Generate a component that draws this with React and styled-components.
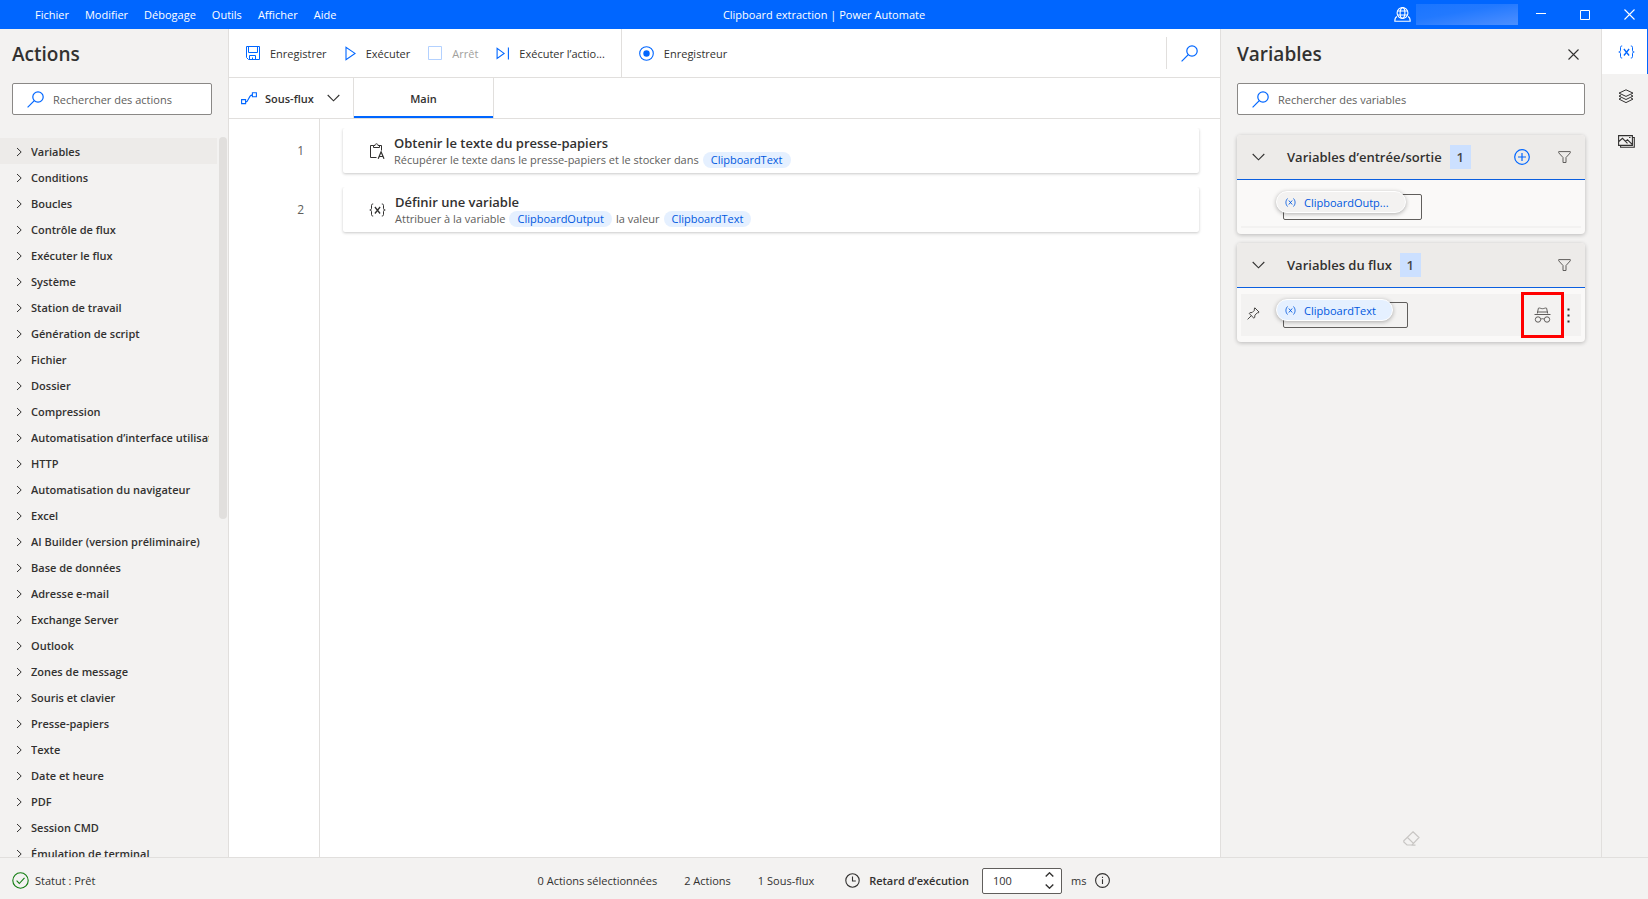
import styled, { createGlobalStyle } from "styled-components";

const GlobalStyle = createGlobalStyle`
  *, *::before, *::after { box-sizing: border-box; }
  body {
    margin: 0;
    font-family: "Open Sans", "Noto Sans", sans-serif;
    font-size: 11px;
    line-height: 16px;
    color: #323130;
    background: #f3f2f1;
  }
  h1, h2, h3, p, ul, ol { margin: 0; padding: 0; }
  ul, ol { list-style: none; }
  button, input {
    margin: 0;
    padding: 0;
    border: 0;
    font: inherit;
    color: inherit;
    background: none;
  }
  svg { display: block; flex: none; }
`;

const Page = styled.div`
  height: 100vh;
  display: flex;
  flex-direction: column;
  overflow: hidden;
`;

/* ---------- title bar ---------- */

const TitleBar = styled.header`
  height: 29px;
  flex: none;
  display: grid;
  grid-template-columns: 1fr auto 1fr;
  align-items: center;
  background: #0066ff;
  color: #fff;
`;

const MenuBar = styled.nav`
  display: flex;
  gap: 16px;
  padding-left: 35px;
  white-space: nowrap;
`;

const AppTitle = styled.h1`
  font-size: 11px;
  font-weight: 400;
`;

const WindowControls = styled.div`
  display: flex;
  justify-content: flex-end;
  align-items: center;
  gap: 34px;
  padding-right: 13px;
`;

const Account = styled.div`
  display: flex;
  align-items: center;
  gap: 5px;
  margin-right: -16px;
`;

const AccountName = styled.span`
  width: 102px;
  height: 21px;
  background: linear-gradient(170deg, #1a75ff 0%, #2279ff 40%, #4088ff 80%, #4a90ff 100%);
`;

/* ---------- shared parts ---------- */

const Body = styled.div`
  flex: 1;
  min-height: 0;
  display: flex;
`;

const PanelTitle = styled.h2`
  font-size: 19px;
  line-height: 28px;
  font-weight: 600;
`;

const SearchBox = styled.label`
  height: 32px;
  flex: none;
  display: flex;
  align-items: center;
  gap: 9px;
  padding: 0 14px;
  border: 1px solid #8a8886;
  border-radius: 2px;
  background: #fff;

  input {
    flex: 1;
    min-width: 0;
    padding-top: 2px;
    outline: none;
  }
  input::placeholder {
    color: #605e5c;
    opacity: 1;
  }
`;

/* ---------- actions panel ---------- */

const ActionsPanel = styled.aside`
  width: 229px;
  flex: none;
  display: flex;
  flex-direction: column;
  border-right: 1px solid #e1dfdd;

  ${PanelTitle} { padding: 11px 12px 15px; }
  ${SearchBox} { margin: 0 16px 22px 12px; }
`;

const ListArea = styled.div`
  flex: 1;
  min-height: 0;
  display: flex;
  gap: 2px;
  padding-right: 1px;
`;

const ActionList = styled.ul`
  flex: 1;
  min-width: 0;
  overflow: hidden;
  padding-top: 1px;
`;

const ActionGroup = styled.button`
  width: 100%;
  height: 26px;
  display: flex;
  align-items: center;
  gap: 8px;
  padding: 1px 8px 0 15px;
  font-weight: 600;
  white-space: nowrap;
  text-align: left;
  background: ${props => (props.$active ? "#edebe9" : "transparent")};

  span {
    flex: 1;
    overflow: hidden;
  }
`;

const ScrollThumb = styled.div`
  width: 8px;
  height: 53%;
  border-radius: 4px;
  background: #e1dfdd;
`;

/* ---------- flow designer ---------- */

const Designer = styled.main`
  flex: 1;
  min-width: 0;
  display: flex;
  flex-direction: column;
  background: #fff;
`;

const Toolbar = styled.div`
  height: 49px;
  flex: none;
  display: flex;
  align-items: center;
  border-bottom: 1px solid #e1dfdd;
`;

const ToolGroup = styled.div`
  height: 100%;
  display: flex;
  align-items: center;
  gap: 18px;
  padding: 0 16px 0 17px;
  border-right: ${props => (props.$divided ? "1px solid #e1dfdd" : "0")};
`;

const ToolButton = styled.button`
  display: flex;
  align-items: center;
  gap: 10px;
  white-space: nowrap;
  color: ${props => (props.disabled ? "#a19f9d" : "#323130")};

  span { padding-top: 2px; }
`;

const ToolSearch = styled.button`
  height: 32px;
  margin-left: auto;
  padding: 0 22px 0 14px;
  border-left: 1px solid #e1dfdd;
`;

const TabStrip = styled.div`
  height: 41px;
  flex: none;
  display: flex;
  border-bottom: 1px solid #e1dfdd;
`;

const Subflows = styled.button`
  width: 125px;
  display: flex;
  align-items: center;
  gap: 8px;
  padding: 0 13px 0 12px;
  font-weight: 600;
  white-space: nowrap;
  border-right: 1px solid #e1dfdd;

  span { padding-top: 2px; }
  svg:last-child { margin-left: auto; }
`;

const Tab = styled.button`
  width: 140px;
  padding-top: 2px;
  font-weight: 600;
  border-right: 1px solid #e1dfdd;
  box-shadow: inset 0 -2px #0066ff;
`;

const Canvas = styled.div`
  flex: 1;
  min-height: 0;
  display: flex;
`;

const Gutter = styled.ol`
  width: 91px;
  flex: none;
  padding: 9px 15px 0 0;
  display: flex;
  flex-direction: column;
  gap: 14px;
  border-right: 1px solid #e1dfdd;
  text-align: right;
  font-size: 12px;
  line-height: 45px;
  color: #605e5c;
`;

const Steps = styled.ol`
  flex: 1;
  min-width: 0;
  display: flex;
  flex-direction: column;
  gap: 14px;
  padding: 9px 21px 0 23px;
`;

const Step = styled.li`
  height: 45px;
  display: flex;
  align-items: center;
  gap: 9px;
  padding-left: 26px;
  border-radius: 2px;
  background: #fff;
  box-shadow: 0 1px 3px rgba(0, 0, 0, 0.22);
  clip-path: inset(0 -4px -4px -4px);
`;

const StepTitle = styled.h3`
  font-size: 13px;
  line-height: 18px;
  font-weight: 600;
`;

const StepText = styled.p`
  display: flex;
  gap: 4px;
  white-space: nowrap;
  color: #605e5c;
`;

const Token = styled.span`
  padding: 0 8px;
  border-radius: 8px;
  background: #e5f0ff;
  color: #0058e0;
`;

/* ---------- variables panel ---------- */

const VariablesPanel = styled.aside`
  width: 382px;
  flex: none;
  display: flex;
  flex-direction: column;
  padding: 0 16px 11px;
  border-left: 1px solid #e1dfdd;
  border-right: 1px solid #e1dfdd;
`;

const PanelHeader = styled.div`
  display: flex;
  align-items: center;
  justify-content: space-between;
  padding: 11px 6px 15px 0;
`;

const Cards = styled.div`
  flex: 1;
  display: flex;
  flex-direction: column;
  gap: 9px;
  padding-top: 20px;
`;

const Card = styled.section`
  border-radius: 4px;
  background: #faf9f8;
  box-shadow: 0 1px 4px rgba(0, 0, 0, 0.24);
`;

const CardHeader = styled.div`
  height: 45px;
  display: flex;
  align-items: center;
  padding: 0 14px 0 15px;
  border-radius: 4px 4px 0 0;
  border-bottom: 1px solid #0b5fe0;
  background: #edebe9;

  h3 {
    margin: 0 8px 0 22px;
    font-size: 13px;
    font-weight: 600;
  }
`;

const Count = styled.span`
  width: 21px;
  line-height: 24px;
  text-align: center;
  font-size: 13px;
  font-weight: 600;
  color: #484644;
  background: #cce0ff;
`;

const CardTools = styled.div`
  margin-left: auto;
  display: flex;
  align-items: center;
  gap: 28px;
`;

const VariableRow = styled.div`
  height: 54px;
  padding: 6px 4px;
`;

const VariableInner = styled.div`
  height: 42px;
  display: flex;
  align-items: center;
  border-bottom: ${props => (props.$hovered ? "0" : "2px solid #f3f2f1")};
  background: ${props => (props.$hovered ? "#f3f2f1" : "transparent")};
`;

const PinSlot = styled.div`
  width: 42px;
  padding-left: 6px;
`;

const ValueBox = styled.div`
  position: relative;
  align-self: flex-start;
  width: ${props => props.$width}px;
  height: 26px;
  margin-top: 8px;
  border: 1px solid #605e5c;
  border-radius: 2px;
`;

/* the name chip floats over the corner of its value box */
const NameChip = styled.button`
  position: absolute;
  left: -8px;
  top: -4px;
  height: 22px;
  display: flex;
  align-items: center;
  gap: 8px;
  padding: 0 16px 0 8px;
  border: 1px solid #fff;
  border-radius: 11px;
  white-space: nowrap;
  color: #0058e0;
  background: ${props => (props.$tinted ? "#e5f0ff" : "#f3f2f1")};
  box-shadow: 0 1px 4px rgba(0, 0, 0, 0.3);

  span { padding-top: 2px; }
`;

const RowTools = styled.div`
  height: 100%;
  margin-left: auto;
  display: flex;
  align-items: center;
  padding-right: 11px;
  gap: 3px;
`;

const SensitiveButton = styled.button`
  position: relative;
  width: 43px;
  height: 100%;
  display: flex;
  align-items: center;
  justify-content: center;

  &::after {
    content: "";
    position: absolute;
    inset: -2px 0;
    border: 3px solid #ff0000;
  }
`;

const PanelFooter = styled.div`
  display: flex;
  justify-content: center;
`;

/* ---------- right rail ---------- */

const Rail = styled.nav`
  width: 46px;
  flex: none;
`;

const RailButton = styled.button`
  width: 100%;
  height: 45px;
  display: flex;
  align-items: center;
  justify-content: center;
  padding-left: 2px;
  color: ${props => (props.$active ? "#0066ff" : "#323130")};
  background: ${props => (props.$active ? "#fff" : "transparent")};
  box-shadow: ${props => (props.$active ? "inset -1px 0 #0066ff" : "none")};
`;

/* ---------- status bar ---------- */

const StatusBar = styled.footer`
  height: 42px;
  flex: none;
  display: grid;
  grid-template-columns: 1fr auto 1fr;
  align-items: center;
  border-top: 1px solid #e1dfdd;
  padding: 4px 12px 0;
  white-space: nowrap;
`;

const Status = styled.div`
  display: flex;
  align-items: center;
  gap: 6px;
`;

const StatusCenter = styled.div`
  display: flex;
  align-items: center;
  gap: 27px;
`;

const Delay = styled.div`
  display: flex;
  align-items: center;
  gap: 9px;
  margin-left: 4px;

  label { font-weight: 600; }
`;

const DelayField = styled.div`
  width: 80px;
  height: 26px;
  display: flex;
  align-items: center;
  margin-left: 4px;
  padding: 0 7px 0 10px;
  border: 1px solid #605e5c;
  border-radius: 2px;
  background: #fff;

  input {
    flex: 1;
    min-width: 0;
    outline: none;
    appearance: textfield;
  }
  input::-webkit-inner-spin-button { appearance: none; }
`;

const Spinner = styled.div`
  display: flex;
  flex-direction: column;
  gap: 7px;
`;

/* ---------- icons ---------- */

const Icon = ({ w = 16, h = 16, color = "currentColor", stroke = 1, children }) => (
  <svg width={w} height={h} viewBox={`0 0 ${w} ${h}`} fill="none" stroke={color} strokeWidth={stroke} aria-hidden="true">
    {children}
  </svg>
);

const SearchIcon = () => (
  <Icon w={17} h={17} color="#0066ff" stroke={1.2}>
    <circle cx="11" cy="6" r="5.2" />
    <path d="M7.3 9.7 0.6 16.4" />
  </Icon>
);

const ChevronRight = () => (
  <Icon w={8} h={10} stroke={1}><path d="M2 1l4.2 4L2 9" /></Icon>
);

const ChevronDown = () => (
  <Icon w={13} h={8} stroke={1.1}><path d="M0.7 1l5.8 5.8L12.3 1" /></Icon>
);

const SaveIcon = () => (
  <Icon w={14} h={14} color="#0066ff">
    <path d="M0.5 0.5h13v13h-11l-2-2zM2.5 0.5v6h9v-6M3.5 13.5v-4h6v4M6.5 11.5v2" />
  </Icon>
);

const PlayIcon = () => (
  <Icon w={11} h={15} color="#0066ff" stroke={1.1}><path d="M1 1.2v12.4l9-6.2z" /></Icon>
);

const StopIcon = () => (
  <Icon w={14} h={14} color="#b3d1ff"><path d="M0.5 0.5h13v13h-13z" /></Icon>
);

const NextIcon = () => (
  <Icon w={13} h={13} color="#0066ff" stroke={1.1}><path d="M1.1 1.3v10.2l7-5.1zM12.4 0.4v12" /></Icon>
);

const RecordIcon = () => (
  <Icon w={15} h={15} color="#0066ff" stroke={1.1}>
    <circle cx="7.5" cy="7.5" r="6.8" />
    <circle cx="7.5" cy="7.5" r="3.2" fill="#0066ff" stroke="none" />
  </Icon>
);

const SubflowIcon = () => (
  <Icon w={16} h={13} color="#0066ff" stroke={1.1}>
    <path d="M0.6 7.6h4v4h-4zM11.4 0.8h4v4h-4zM4.6 10.2C8.2 9.6 7.4 3 11.4 2.8" />
  </Icon>
);

const ClipboardIcon = () => (
  <Icon w={16} h={16} color="#323130">
    <path d="M7.5 14.5h-6v-12h3M10 2.5h2.500v5M4.5 4.500V2.500h1.500C6 0.200 9 0.200 9 2.500h1.500v2z" />
    <path d="M9.200 15.800l2.900-7 2.900 7M10.200 13.500h3.800" stroke="#323130" strokeWidth="1.2" />
  </Icon>
);

const VariableIcon = () => (
  <Icon w={17} h={14}>
    <path d="M4.200 1C2.600 1 2.500 1.700 2.500 2.700v2.600C2.500 6.400 2 7 0.800 7 2 7 2.500 7.600 2.500 8.700v2.600c0 1 .1 1.700 1.700 1.700M12.800 1c1.600 0 1.700.7 1.700 1.700v2.600c0 1.100.5 1.700 1.700 1.700-1.200 0-1.700.6-1.700 1.700v2.600c0 1-.1 1.700-1.700 1.700" />
    <path d="M5.900 4l5.200 6.500M11.100 4l-5.200 6.500" strokeWidth="1.3" />
  </Icon>
);

const ParenVariableIcon = () => (
  <Icon w={11} h={9} stroke={0.9}>
    <path d="M2.5 0.5C0.4 3 0.4 6 2.5 8.5M8.5 0.5C10.6 3 10.6 6 8.5 8.5M3.8 2.5l3.4 4M7.2 2.5L3.8 6.5" />
  </Icon>
);

const CloseIcon = () => (
  <Icon w={11} h={11} stroke={1.1}><path d="M0.5 0.5l10 10M10.5 0.5l-10 10" /></Icon>
);

const PlusIcon = () => (
  <Icon w={16} h={16} color="#0066ff" stroke={1.2}>
    <circle cx="8" cy="8" r="7.3" />
    <path d="M8 4v8M4 8h8" />
  </Icon>
);

const FilterIcon = () => (
  <Icon w={13} h={12} color="#605e5c"><path d="M0.7 0.6h11.6v1.2L8 6.5v5H5v-5L0.7 1.8z" /></Icon>
);

const PinIcon = () => (
  <Icon w={13} h={13} color="#484644">
    <path d="M7.8 0.8l4.3 4.3-1 .9-.8-.2-2.400 2.400-.2 2.300-.8.700L2.200 6.500l.7-.8 2.300-.2 2.400-2.400-.4-1zM4.400 8.600L0.600 12.400" />
  </Icon>
);

const SpyIcon = () => (
  <Icon w={17} h={16} color="#605e5c">
    <path d="M3.3 6.5L4.4 1.2c1.5-.6 2.200.5 4.100.5s2.600-1.100 4.100-.5l1.100 5.300M0.500 7.500h16M3.200 5h10.600" />
    <circle cx="4" cy="12.5" r="2.7" />
    <circle cx="13" cy="12.5" r="2.7" />
    <path d="M6.7 12.3c1-.8 2.600-.8 3.600 0" />
  </Icon>
);

const MoreIcon = () => (
  <svg width="3" height="15" viewBox="0 0 3 15" fill="#323130" aria-hidden="true">
    <path d="M0.5 0.5h2v2h-2zM0.5 6.5h2v2h-2zM0.5 12.5h2v2h-2z" />
  </svg>
);

const LayersIcon = () => (
  <Icon w={16} h={15}>
    <path d="M8 0.8l7 3.3-7 3.300-7-3.300zM3 6L1 7.100l7 3.400 7-3.400-2-1.100M3 9l-2 1.100 7 3.500 7-3.500-2-1.100" />
  </Icon>
);

const ImagesIcon = () => (
  <Icon w={17} h={13} stroke={1.1}>
    <path d="M0.6 0.6h13.8v9.800H0.600zM14.400 2.500h1.900v9.800H2.600v-1.900M0.800 6.500L4.500 3.300l5 5M7.500 6.500l2-1.700 4.700 4.500" />
    <path d="M11 2.5h1.500" />
  </Icon>
);

const GlobeIcon = () => (
  <Icon w={17} h={15} stroke={1.1}>
    <circle cx="8.5" cy="6" r="5.4" />
    <ellipse cx="8.5" cy="6" rx="2.4" ry="5.4" />
    <path d="M3.6 4h9.800M3.600 8h9.800M3 9.400C1.500 10 0.800 11 0.800 14.200h15.400c0-3.200-.7-4.200-2.200-4.800" />
  </Icon>
);

const EraserIcon = () => (
  <Icon w={17} h={15} color="#c8c6c4" stroke={1.2}>
    <path d="M10 0.8l6 5.700L9 14H4L0.800 11V9.700zM4.500 6.500l5.700 5.700M8.500 14.200h4" />
  </Icon>
);

const CheckIcon = () => (
  <Icon w={17} h={17} color="#107c10" stroke={1.1}>
    <circle cx="8.5" cy="8.5" r="7.7" />
    <path d="M4.6 8.700l2.700 2.800 5.200-5.600" />
  </Icon>
);

const ClockIcon = () => (
  <Icon w={15} h={15} stroke={1.1}>
    <circle cx="7.5" cy="7.5" r="6.7" />
    <path d="M7.5 3.5V8h3.300" />
  </Icon>
);

const InfoIcon = () => (
  <Icon w={15} h={15} stroke={1.1}>
    <circle cx="7.5" cy="7.5" r="6.9" />
    <path d="M7.5 6.3V11M7.5 3.800v1.300" />
  </Icon>
);

const menus = ["Fichier", "Modifier", "Débogage", "Outils", "Afficher", "Aide"];

const actionGroups = [
  "Variables",
  "Conditions",
  "Boucles",
  "Contrôle de flux",
  "Exécuter le flux",
  "Système",
  "Station de travail",
  "Génération de script",
  "Fichier",
  "Dossier",
  "Compression",
  "Automatisation d’interface utilisateur",
  "HTTP",
  "Automatisation du navigateur",
  "Excel",
  "AI Builder (version préliminaire)",
  "Base de données",
  "Adresse e-mail",
  "Exchange Server",
  "Outlook",
  "Zones de message",
  "Souris et clavier",
  "Presse-papiers",
  "Texte",
  "Date et heure",
  "PDF",
  "Session CMD",
  "Émulation de terminal",
];

const Search = ({ placeholder }) => (
  <SearchBox>
    <SearchIcon />
    <input type="text" placeholder={placeholder} aria-label={placeholder} />
  </SearchBox>
);

const App = () => (
  <Page>
    <GlobalStyle />
    <TitleBar>
      <MenuBar>
        {menus.map(name => <button key={name}>{name}</button>)}
      </MenuBar>
      <AppTitle>Clipboard extraction | Power Automate</AppTitle>
      <WindowControls>
        <Account>
          <GlobeIcon />
          <AccountName />
        </Account>
        <button aria-label="Réduire"><Icon w={10} h={11}><path d="M0 4.500h10" /></Icon></button>
        <button aria-label="Agrandir"><Icon w={10} h={10}><path d="M0.500 0.500h9v9h-9z" /></Icon></button>
        <button aria-label="Fermer"><CloseIcon /></button>
      </WindowControls>
    </TitleBar>

    <Body>
      <ActionsPanel>
        <PanelTitle>Actions</PanelTitle>
        <Search placeholder="Rechercher des actions" />
        <ListArea>
          <ActionList>
            {actionGroups.map((name, i) => (
              <li key={name}>
                <ActionGroup $active={i === 0}>
                  <ChevronRight />
                  <span>{name}</span>
                </ActionGroup>
              </li>
            ))}
          </ActionList>
          <ScrollThumb />
        </ListArea>
      </ActionsPanel>

      <Designer>
        <Toolbar>
          <ToolGroup $divided>
            <ToolButton><SaveIcon /><span>Enregistrer</span></ToolButton>
            <ToolButton><PlayIcon /><span>Exécuter</span></ToolButton>
            <ToolButton disabled><StopIcon /><span>Arrêt</span></ToolButton>
            <ToolButton><NextIcon /><span>Exécuter l’actio...</span></ToolButton>
          </ToolGroup>
          <ToolGroup>
            <ToolButton><RecordIcon /><span>Enregistreur</span></ToolButton>
          </ToolGroup>
          <ToolSearch aria-label="Rechercher"><SearchIcon /></ToolSearch>
        </Toolbar>
        <TabStrip>
          <Subflows><SubflowIcon /><span>Sous-flux</span><ChevronDown /></Subflows>
          <Tab>Main</Tab>
        </TabStrip>
        <Canvas>
          <Gutter>
            <li>1</li>
            <li>2</li>
          </Gutter>
          <Steps>
            <Step>
              <ClipboardIcon />
              <div>
                <StepTitle>Obtenir le texte du presse-papiers</StepTitle>
                <StepText>
                  Récupérer le texte dans le presse-papiers et le stocker dans
                  <Token>ClipboardText</Token>
                </StepText>
              </div>
            </Step>
            <Step>
              <VariableIcon />
              <div>
                <StepTitle>Définir une variable</StepTitle>
                <StepText>
                  Attribuer à la variable
                  <Token>ClipboardOutput</Token>
                  la valeur
                  <Token>ClipboardText</Token>
                </StepText>
              </div>
            </Step>
          </Steps>
        </Canvas>
      </Designer>

      <VariablesPanel>
        <PanelHeader>
          <PanelTitle>Variables</PanelTitle>
          <button aria-label="Fermer le volet"><CloseIcon /></button>
        </PanelHeader>
        <Search placeholder="Rechercher des variables" />
        <Cards>
          <Card>
            <CardHeader>
              <ChevronDown />
              <h3>Variables d’entrée/sortie</h3>
              <Count>1</Count>
              <CardTools>
                <button aria-label="Ajouter"><PlusIcon /></button>
                <button aria-label="Filtrer"><FilterIcon /></button>
              </CardTools>
            </CardHeader>
            <VariableRow>
              <VariableInner>
                <PinSlot />
                <ValueBox $width={139}>
                  <NameChip><ParenVariableIcon /><span>ClipboardOutp...</span></NameChip>
                </ValueBox>
              </VariableInner>
            </VariableRow>
          </Card>
          <Card>
            <CardHeader>
              <ChevronDown />
              <h3>Variables du flux</h3>
              <Count>1</Count>
              <CardTools>
                <button aria-label="Filtrer"><FilterIcon /></button>
              </CardTools>
            </CardHeader>
            <VariableRow>
              <VariableInner $hovered>
                <PinSlot><button aria-label="Épingler"><PinIcon /></button></PinSlot>
                <ValueBox $width={125}>
                  <NameChip $tinted><ParenVariableIcon /><span>ClipboardText</span></NameChip>
                </ValueBox>
                <RowTools>
                  <SensitiveButton aria-label="Marquer comme sensible"><SpyIcon /></SensitiveButton>
                  <button aria-label="Plus"><MoreIcon /></button>
                </RowTools>
              </VariableInner>
            </VariableRow>
          </Card>
        </Cards>
        <PanelFooter><EraserIcon /></PanelFooter>
      </VariablesPanel>

      <Rail>
        <RailButton $active aria-label="Variables"><VariableIcon /></RailButton>
        <RailButton aria-label="Éléments d’interface"><LayersIcon /></RailButton>
        <RailButton aria-label="Images"><ImagesIcon /></RailButton>
      </Rail>
    </Body>

    <StatusBar>
      <Status><CheckIcon />Statut : Prêt</Status>
      <StatusCenter>
        <span>0 Actions sélectionnées</span>
        <span>2 Actions</span>
        <span>1 Sous-flux</span>
        <Delay>
          <ClockIcon />
          <label htmlFor="delay">Retard d’exécution</label>
          <DelayField>
            <input id="delay" type="number" defaultValue="100" />
            <Spinner>
              <button aria-label="Augmenter"><Icon w={9} h={5} stroke={1.4}><path d="M0.7 4.4l3.8-3.600 3.800 3.600" /></Icon></button>
              <button aria-label="Diminuer"><Icon w={9} h={5} stroke={1.4}><path d="M0.7 0.6l3.8 3.600 3.800-3.600" /></Icon></button>
            </Spinner>
          </DelayField>
          <span>ms</span>
          <InfoIcon />
        </Delay>
      </StatusCenter>
    </StatusBar>
  </Page>
);

export default App;
